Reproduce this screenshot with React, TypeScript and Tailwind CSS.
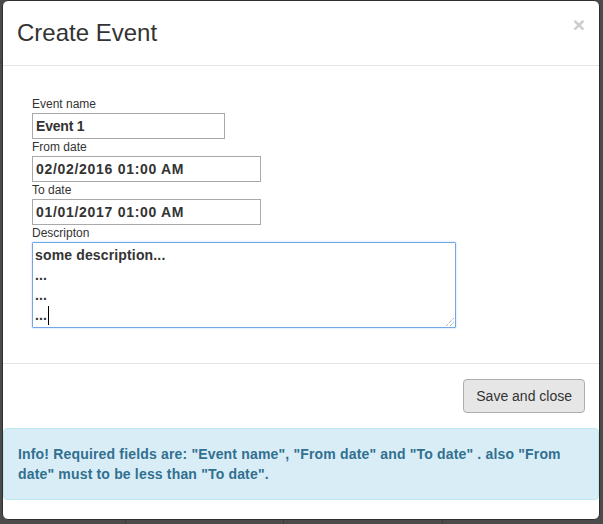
import React from "react";

const font = { fontFamily: '"Liberation Sans", Arial, Helvetica, sans-serif' };

export default function App() {
  return (
    <div
      className="relative w-[603px] h-[524px] overflow-hidden bg-[#4b4b4b]"
      style={font}
    >
      {/* faint page lines behind the backdrop */}
      <div className="absolute left-0 top-[62px] w-[3px] h-px bg-[#3c3c3c]" />
      <div className="absolute left-[125px] top-[519px] w-px h-[5px] bg-[#3a3a3a]" />
      <div className="absolute left-[283px] top-[519px] w-px h-[5px] bg-[#3a3a3a]" />
      <div className="absolute left-[442px] top-[519px] w-px h-[5px] bg-[#3a3a3a]" />

      {/* modal */}
      <div className="relative ml-[2px] w-[598px] h-[520px] bg-white border border-[#2e2e2e] rounded-[6px] overflow-hidden flex flex-col">
        {/* header */}
        <div className="relative h-[65px] border-b border-[#e5e5e5] pl-[14px] pt-[19px]">
          <h4 className="text-[24px] leading-[26px] text-[#333333] font-normal">
            Create Event
          </h4>
          <span className="absolute right-[14px] top-[13px] text-[21px] leading-[21px] font-bold text-[#cccccc]">
            ×
          </span>
        </div>

        {/* body */}
        <div className="pl-[29px] pt-[29px] pb-[35px] border-b border-[#e5e5e5] flex flex-col">
          <label className="block text-[12px] leading-[18px] text-[#333333] h-[18px]">
            Event name
          </label>
          <div className="w-[193px] h-[26px] border border-[#a9a9a9] pl-[3px] flex items-center text-[14px] font-bold text-[#333333] tracking-[-0.2px]">
            Event 1
          </div>
          <label className="block text-[12px] leading-[17px] text-[#333333] h-[17px]">
            From date
          </label>
          <div className="w-[229px] h-[26px] border border-[#a9a9a9] pl-[3px] flex items-center text-[14px] font-bold text-[#333333] tracking-[0.7px]">
            02/02/2016 01:00 AM
          </div>
          <label className="block text-[12px] leading-[17px] text-[#333333] h-[17px]">
            To date
          </label>
          <div className="w-[229px] h-[26px] border border-[#a9a9a9] pl-[3px] flex items-center text-[14px] font-bold text-[#333333] tracking-[0.7px]">
            01/01/2017 01:00 AM
          </div>
          <label className="block text-[12px] leading-[17px] text-[#333333] h-[17px]">
            Descripton
          </label>
          <div className="relative w-[424px] h-[86px] border border-[#74a6e6] rounded-[1px] shadow-[0_0_2px_rgba(102,175,233,0.6)] pl-[2px] pt-[2px] text-[14px] leading-[20px] font-bold text-[#333333] tracking-[0.15px]">
            <div>some description...</div>
            <div>...</div>
            <div>...</div>
            <div className="flex items-center">
              <span>...</span>
              <span className="inline-block w-px h-[19px] bg-black ml-px" />
            </div>
            <svg
              className="absolute right-[1px] bottom-[1px]"
              width="9"
              height="9"
              viewBox="0 0 9 9"
            >
              <line x1="1" y1="9" x2="9" y2="1" stroke="#8a8a8a" strokeWidth="1" strokeDasharray="1 1" />
              <line x1="5" y1="9" x2="9" y2="5" stroke="#8a8a8a" strokeWidth="1" strokeDasharray="1 1" />
            </svg>
          </div>
        </div>

        {/* footer */}
        <div className="flex justify-end pt-[15px] pr-[14px] pb-[15px]">
          <button className="h-[34px] px-[12px] bg-[#e6e6e6] border border-[#adadad] rounded-[4px] text-[14px] text-[#333333] leading-[20px]">
            Save and close
          </button>
        </div>

        {/* alert */}
        <div className="border border-[#bce8f1] bg-[#d9edf7] rounded-[4px] pl-[14px] pr-[30px] py-[15px] text-[14px] leading-[20px] font-bold text-[#31708f] tracking-[0.17px]">
          Info! Required fields are: "Event name", "From date" and "To date" . also "From date" must to be less than "To date".
        </div>
      </div>
    </div>
  );
}
